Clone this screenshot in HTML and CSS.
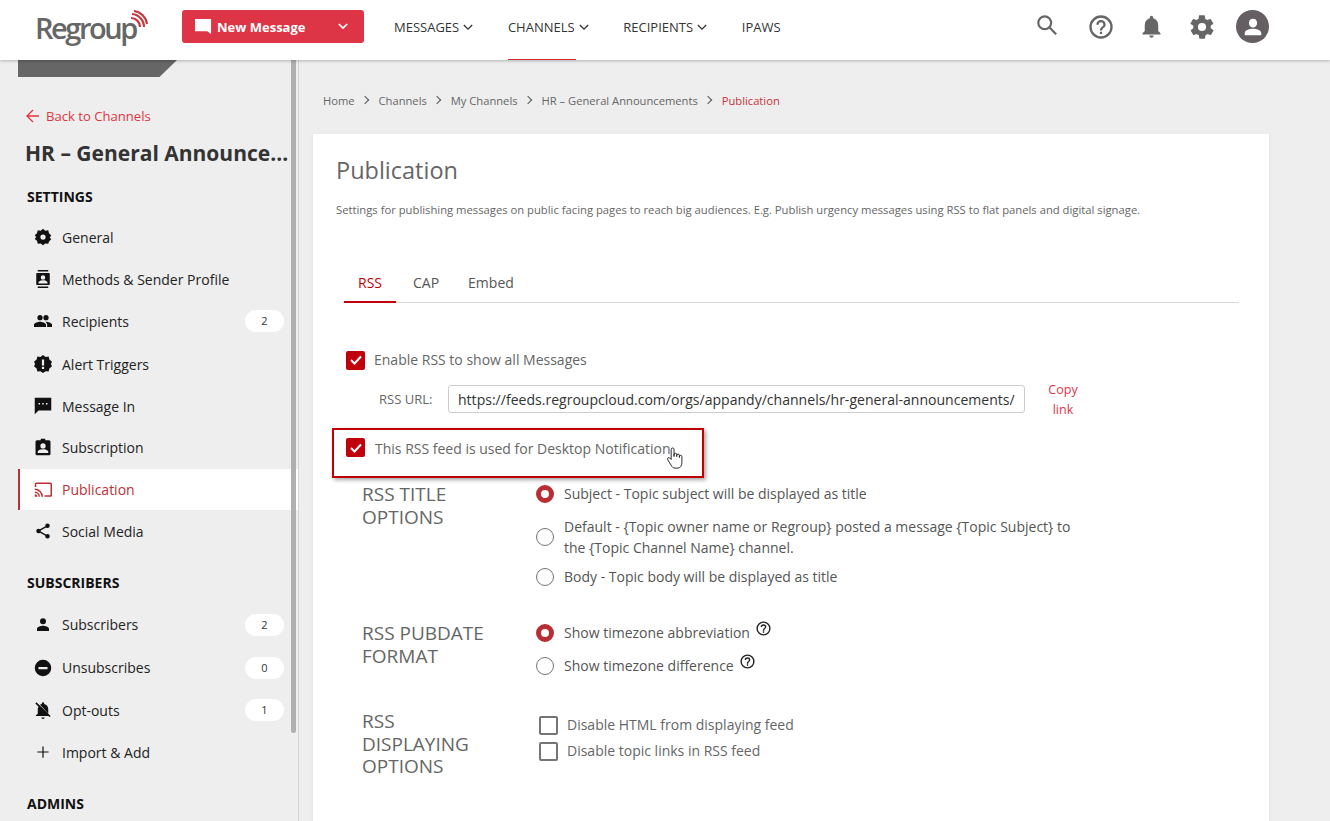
FILE: index.html
```html
<!DOCTYPE html>
<html lang="en">
<head>
    <meta charset="UTF-8">
    <title>Publication - Regroup</title>
    <link rel="stylesheet" href="styles.css">
</head>
<body>
    <header class="topbar">
        <div class="logo">
            <span class="logo-text">Regroup</span>
            <svg class="logo-waves" viewBox="0 0 18 18" width="18" height="18" fill="none" stroke="#c8373c" stroke-width="2.2">
                <path d="M1 8a9 9 0 0 1 9 9"/>
                <path d="M2 4a13 13 0 0 1 12 13" />
                <path d="M4 1a15 15 0 0 1 13 13"/>
            </svg>
        </div>
        <button class="new-message">
            <svg viewBox="0 0 18 18" width="17" height="17" fill="#fff"><path d="M0 1h17v16l-4-3H0z"/></svg>
            <span>New Message</span>
            <svg class="btn-caret" viewBox="0 0 12 8" width="10" height="7" fill="none" stroke="#fff" stroke-width="2"><path d="M1 1l5 5 5-5"/></svg>
        </button>
        <nav class="topnav">
            <a href="#">MESSAGES <svg viewBox="0 0 12 8" width="10" height="7" fill="none" stroke="#333" stroke-width="1.6"><path d="M1 1l5 5 5-5"/></svg></a>
            <a href="#" class="active">CHANNELS <svg viewBox="0 0 12 8" width="10" height="7" fill="none" stroke="#333" stroke-width="1.6"><path d="M1 1l5 5 5-5"/></svg></a>
            <a href="#">RECIPIENTS <svg viewBox="0 0 12 8" width="10" height="7" fill="none" stroke="#333" stroke-width="1.6"><path d="M1 1l5 5 5-5"/></svg></a>
            <a href="#">IPAWS</a>
        </nav>
        <div class="top-icons">
            <svg class="search-icon" viewBox="0 0 24 24" width="22" height="22" fill="none" stroke="#666" stroke-width="2.400"><circle cx="9.500" cy="9.500" r="7"/><path d="M14.500 14.500L22 22"/></svg>
            <svg viewBox="0 0 24 24" width="28" height="28" fill="#666"><path d="M11 18h2v-2h-2v2zm1-16a10 10 0 1 0 0 20 10 10 0 0 0 0-20zm0 18a8 8 0 1 1 0-16 8 8 0 0 1 0 16zm0-14a4 4 0 0 0-4 4h2a2 2 0 1 1 4 0c0 2-3 1.750-3 5h2c0-2.250 3-2.500 3-5a4 4 0 0 0-4-4z"/></svg>
            <svg viewBox="0 0 24 24" width="27" height="27" fill="#666"><path d="M12 22c1.100 0 2-.9 2-2h-4c0 1.100.9 2 2 2zm6-6v-5c0-3.100-1.600-5.600-4.500-6.300V4a1.500 1.500 0 0 0-3 0v.7C7.600 5.400 6 7.900 6 11v5l-2 2v1h16v-1l-2-2z"/></svg>
            <svg viewBox="0 0 24 24" width="28" height="28" fill="#666"><path d="M19.400 13c0-.3.100-.6.100-1s0-.7-.1-1l2.100-1.600c.2-.2.200-.4.100-.6l-2-3.500c-.1-.2-.4-.3-.6-.2l-2.500 1c-.5-.4-1.100-.7-1.700-1l-.4-2.600c0-.3-.2-.5-.5-.5h-4c-.3 0-.5.200-.5.400l-.4 2.700c-.6.300-1.200.6-1.700 1l-2.500-1c-.2-.1-.5 0-.6.200l-2 3.500c-.1.200-.1.400.1.600L4.600 11c0 .3-.1.600-.1 1s0 .7.100 1l-2.100 1.600c-.2.200-.2.400-.1.600l2 3.500c.1.200.4.300.6.200l2.500-1c.5.400 1.100.7 1.700 1l.4 2.600c0 .3.200.5.500.5h4c.3 0 .5-.2.500-.4l.4-2.700c.6-.3 1.200-.6 1.700-1l2.500 1c.2.100.5 0 .6-.2l2-3.500c.1-.2.100-.4-.1-.6L19.400 13zM12 15.500a3.500 3.500 0 1 1 0-7 3.500 3.500 0 0 1 0 7z"/></svg>
            <span class="avatar"><svg viewBox="0 0 24 24" width="22" height="22" fill="#fff"><path d="M12 12.500c2.500 0 4.500-2.200 4.500-5S14.500 3 12 3 7.500 4.700 7.500 7.500s2 5 4.500 5zm0 1.500c-3 0-9 1.500-9 4.500V21h18v-2.500c0-3-6-4.500-9-4.500z"/></svg></span>
        </div>
    </header>

    <div class="layout">
        <aside class="sidebar">
            <div class="side-tab"></div>
            <a href="#" class="back-link">
                <svg viewBox="0 0 14 14" width="14" height="14" fill="none" stroke="#e0353f" stroke-width="1.300"><path d="M13 7H1M7 1L1 7l6 6"/></svg>
                Back to Channels
            </a>
            <div class="channel-name">HR – General Announce...</div>

            <h4 class="side-title">SETTINGS</h4>
            <a href="#" class="side-item">
                <svg viewBox="0 0 24 24" fill="#111"><path fill-rule="evenodd" d="M12 1l3 2.500 4-.5 1 4 3 3-2 2.500 2 2.500-3 3-1 3-4-.5L12 23l-3-2.500-4 .5-1-4-3-2.500L3 12 1 9.500l3-2.500 1-4 4 .5L12 1zm0 7.500a3.500 3.500 0 1 0 0 7 3.500 3.500 0 0 0 0-7z"/></svg>
                <span>General</span>
            </a>
            <a href="#" class="side-item">
                <svg viewBox="0 0 24 24" fill="#111"><path fill-rule="evenodd" d="M5 0h14v2H5zM5 22h14v2H5zM4 4h16a1 1 0 0 1 1 1v14a1 1 0 0 1-1 1H4a1 1 0 0 1-1-1V5a1 1 0 0 1 1-1zm8 3a3 3 0 1 0 0 6 3 3 0 0 0 0-6zm-6 11h12v-1.500c0-2-4-3-6-3s-6 1-6 3z"/></svg>
                <span>Methods &amp; Sender Profile</span>
            </a>
            <a href="#" class="side-item">
                <svg viewBox="0 0 24 24" fill="#111"><path d="M16 11a3.500 3.500 0 1 0 0-7 3.500 3.500 0 0 0 0 7zm-8 0a3.500 3.500 0 1 0 0-7 3.500 3.500 0 0 0 0 7zm0 2c-2.500 0-8 1.300-8 4v3h16v-3c0-2.700-5.500-4-8-4zm8 0h-1c1.200.9 2.500 2.200 2.500 4v3H24v-3c0-2.700-5.500-4-8-4z"/></svg>
                <span>Recipients</span>
                <em class="count">2</em>
            </a>
            <a href="#" class="side-item alert">
                <svg viewBox="0 0 24 24" fill="#111"><path fill-rule="evenodd" d="M12 0l3.500 2.500 4-.5 1 4L24 9l-1.500 3L24 15l-3.500 3-1 4-4-.5L12 24l-3.500-2.500-4 .5-1-4L0 15l1.500-3L0 9l3.500-3 1-4 4 .5L12 0zm-1.500 6v8h3V6zm0 9.500v3h3v-3z"/></svg>
                <span>Alert Triggers</span>
            </a>
            <a href="#" class="side-item">
                <svg viewBox="0 0 24 24" fill="#111"><path fill-rule="evenodd" d="M1 1h22v17H6l-5 5zm5 7v2h2V8zm5 0v2h2V8zm5 0v2h2V8z"/></svg>
                <span>Message In</span>
            </a>
            <a href="#" class="side-item lift">
                <svg viewBox="0 0 24 24" fill="#111"><path fill-rule="evenodd" d="M4 3h5V1h6v2h5a2 2 0 0 1 2 2v16a2 2 0 0 1-2 2H4a2 2 0 0 1-2-2V5a2 2 0 0 1 2-2zm8 4a3.500 3.500 0 1 0 0 7 3.500 3.500 0 0 0 0-7zM5 20h14v-1.500c0-2.500-4.500-3.500-7-3.500s-7 1-7 3.500z"/></svg>
                <span>Subscription</span>
            </a>
            <a href="#" class="side-item active">
                <svg viewBox="0 0 24 24" fill="none" stroke="#bd2f36" stroke-width="2"><path d="M2 8V4a1 1 0 0 1 1-1h19a1 1 0 0 1 1 1v15a1 1 0 0 1-1 1h-8"/><path d="M1 11a10 10 0 0 1 10 10M1 15a6 6 0 0 1 6 6"/><path d="M1 19a2 2 0 0 1 2 2" stroke-width="3"/></svg>
                <span>Publication</span>
            </a>
            <a href="#" class="side-item">
                <svg viewBox="0 0 24 24" fill="#111"><path d="M18 16c-.8 0-1.500.3-2 .8L8.900 12.700c.1-.2.100-.5.100-.7s0-.5-.1-.7L16 7.200c.5.500 1.200.8 2 .8a3 3 0 1 0-3-3c0 .2 0 .5.100.7L8 9.800C7.500 9.300 6.800 9 6 9a3 3 0 1 0 0 6c.8 0 1.500-.3 2-.8l7.100 4.100c-.1.200-.1.500-.1.700a3 3 0 1 0 3-3z"/></svg>
                <span>Social Media</span>
            </a>

            <h4 class="side-title second">SUBSCRIBERS</h4>
            <a href="#" class="side-item tall">
                <svg viewBox="0 0 24 24" fill="#111"><path d="M12 11a4 4 0 1 0 0-8 4 4 0 0 0 0 8zm0 2c-2.700 0-8 1.300-8 4v3h16v-3c0-2.700-5.300-4-8-4z"/></svg>
                <span>Subscribers</span>
                <em class="count">2</em>
            </a>
            <a href="#" class="side-item tall">
                <svg viewBox="0 0 24 24" fill="#111"><path fill-rule="evenodd" d="M12 1a11 11 0 1 0 0 22 11 11 0 0 0 0-22zM6 10.500h12v3H6z"/></svg>
                <span>Unsubscribes</span>
                <em class="count">0</em>
            </a>
            <a href="#" class="side-item">
                <svg viewBox="0 0 24 24" fill="#111"><path d="M12 24c1.300 0 2.200-1 2.200-2H9.800c0 1 .9 2 2.200 2zM19 11c0-3.500-2-6.300-5.500-7V3a1.500 1.500 0 0 0-3 0v1c-1 .2-1.800.6-2.500 1.100L19 16.500zM3.300 1.800L1.800 3.300 6 7.500c-.6 1-1 2.200-1 3.500v6l-2.500 2v1h16.800l1.400 1.400 1.500-1.500z"/></svg>
                <span>Opt-outs</span>
                <em class="count">1</em>
            </a>
            <a href="#" class="side-item">
                <svg viewBox="0 0 24 24" fill="none" stroke="#111" stroke-width="1.600"><path d="M12 4.500v15M4.500 12h15"/></svg>
                <span>Import &amp; Add</span>
            </a>

            <h4 class="side-title second">ADMINS</h4>
            <div class="side-scroll"></div>
        </aside>

        <main class="main">
            <div class="crumbs">
                <a href="#">Home</a><i></i>
                <a href="#">Channels</a><i></i>
                <a href="#">My Channels</a><i></i>
                <a href="#">HR – General Announcements</a><i></i>
                <a href="#" class="current">Publication</a>
            </div>

            <section class="card">
                <h2>Publication</h2>
                <p class="desc">Settings for publishing messages on public facing pages to reach big audiences. E.g. Publish urgency messages using RSS to flat panels and digital signage.</p>

                <div class="tabs">
                    <a href="#" class="active">RSS</a>
                    <a href="#">CAP</a>
                    <a href="#">Embed</a>
                </div>

                <div class="check-row first">
                    <span class="box checked"><svg viewBox="0 0 14 14" width="14" height="14" fill="none" stroke="#fff" stroke-width="2"><path d="M2 7l3.500 3.500L12 3.500"/></svg></span>
                    <label>Enable RSS to show all Messages</label>
                </div>
                <div class="url-row">
                    <label>RSS URL:</label>
                    <input type="text" value="https://feeds.regroupcloud.com/orgs/appandy/channels/hr-general-announcements/">
                    <a href="#" class="copy">Copy<br>link</a>
                </div>
                <div class="callout">
                    <span class="box checked"><svg viewBox="0 0 14 14" width="14" height="14" fill="none" stroke="#fff" stroke-width="2"><path d="M2 7l3.500 3.500L12 3.500"/></svg></span>
                    <label>This RSS feed is used for Desktop Notification</label>
                    <svg class="cursor" viewBox="0 0 18 24" width="18" height="23" fill="#fff" stroke="#222" stroke-width="1"><path d="M5 2.500a1.500 1.500 0 0 1 3 0V10V8a1.400 1.400 0 0 1 2.800 0v2-1.200a1.400 1.400 0 0 1 2.800 0V11 10a1.300 1.300 0 0 1 2.600 0v6c0 3-1.500 6-4 6H9c-2 0-3-1-4-3l-3.500-5.500c-1-2 1-3 2-2L5 13z"/></svg>
                </div>

                <div class="option-group title-opts">
                    <h3>RSS TITLE OPTIONS</h3>
                    <div class="options">
                        <div class="radio-row"><span class="radio on"></span><label>Subject - Topic subject will be displayed as title</label></div>
                        <div class="radio-row"><span class="radio"></span><label>Default - {Topic owner name or Regroup} posted a message {Topic Subject} to the {Topic Channel Name} channel.</label></div>
                        <div class="radio-row"><span class="radio"></span><label>Body - Topic body will be displayed as title</label></div>
                    </div>
                </div>

                <div class="option-group date-opts">
                    <h3>RSS PUBDATE FORMAT</h3>
                    <div class="options">
                        <div class="radio-row"><span class="radio on"></span><label>Show timezone abbreviation</label><svg class="hint" viewBox="0 0 24 24" width="17" height="17" fill="#222"><path d="M11 18h2v-2h-2v2zm1-16a10 10 0 1 0 0 20 10 10 0 0 0 0-20zm0 18a8 8 0 1 1 0-16 8 8 0 0 1 0 16zm0-14a4 4 0 0 0-4 4h2a2 2 0 1 1 4 0c0 2-3 1.750-3 5h2c0-2.250 3-2.500 3-5a4 4 0 0 0-4-4z"/></svg></div>
                        <div class="radio-row"><span class="radio"></span><label>Show timezone difference</label><svg class="hint" viewBox="0 0 24 24" width="17" height="17" fill="#222"><path d="M11 18h2v-2h-2v2zm1-16a10 10 0 1 0 0 20 10 10 0 0 0 0-20zm0 18a8 8 0 1 1 0-16 8 8 0 0 1 0 16zm0-14a4 4 0 0 0-4 4h2a2 2 0 1 1 4 0c0 2-3 1.750-3 5h2c0-2.250 3-2.500 3-5a4 4 0 0 0-4-4z"/></svg></div>
                    </div>
                </div>

                <div class="option-group display-opts">
                    <h3>RSS DISPLAYING OPTIONS</h3>
                    <div class="options checks">
                        <div class="check-row"><span class="box"></span><label>Disable HTML from displaying feed</label></div>
                        <div class="check-row"><span class="box"></span><label>Disable topic links in RSS feed</label></div>
                    </div>
                </div>
            </section>
        </main>
    </div>
</body>
</html>
```

FILE: styles.css
```css
* {
    box-sizing: border-box;
}

html, body {
    height: 100%;
}

body {
    margin: 0;
    overflow: hidden;
    background: #eeeeee;
    color: #333;
    font-family: 'Open Sans', sans-serif;
    font-size: 14px;
}

a {
    color: inherit;
    text-decoration: none;
}

/* top bar */
.topbar {
    position: relative;
    z-index: 2;
    display: flex;
    align-items: center;
    height: 60px;
    padding-bottom: 7px;
    background: #fff;
    box-shadow: 0 1px 3px rgba(0,0,0,0.25);
}

.logo {
    position: relative;
    width: 182px;
    padding: 2px 0 0 35px;
}

.logo-text {
    color: #666;
    font-size: 29px;
    font-weight: 600;
    letter-spacing: -2.450px;
}

.logo-waves {
    position: absolute;
    left: 130px;
    top: 4px;
}

.new-message {
    display: flex;
    align-items: center;
    gap: 5px;
    width: 182px;
    height: 33px;
    padding: 0 16px 0 13px;
    background: #de3546;
    border: none;
    border-radius: 3px;
    color: #fff;
    font-family: inherit;
    font-size: 13px;
    font-weight: 700;
}

.btn-caret {
    margin-left: auto;
}

.topnav {
    display: flex;
    align-self: stretch;
    margin: 0 0 -7px 30px;
}

.topnav a {
    position: relative;
    display: flex;
    align-items: center;
    gap: 4px;
    height: 60px;
    margin-right: 34.700px;
    padding-bottom: 7px;
    color: #333;
    font-size: 13px;
}

.topnav a svg {
    margin-top: 2px;
}

.topnav a.active::after {
    content: "";
    position: absolute;
    left: 0;
    bottom: 0;
    width: 68px;
    height: 1px;
    background: #cf2b35;
}

.top-icons {
    display: flex;
    align-items: center;
    gap: 23px;
    margin-left: auto;
    padding-right: 61px;
}

.search-icon {
    margin: -3px 6px 0 0;
}

.avatar {
    display: flex;
    align-items: center;
    justify-content: center;
    width: 33px;
    height: 33px;
    margin-left: -3px;
    background: #655e63;
    border-radius: 50%;
}

/* sidebar */
.layout {
    display: flex;
    height: 761px;
}

.sidebar {
    position: relative;
    width: 299px;
    padding-left: 18px;
    overflow: hidden;
    border-right: 1px solid #d4d4d4;
}

.side-tab {
    width: 159px;
    height: 17px;
    background: #666;
    clip-path: polygon(0 0, 100% 0, 89% 100%, 0 100%);
}

.back-link {
    display: flex;
    align-items: center;
    gap: 6px;
    margin: 30px 0 0 8px;
    color: #e0353f;
    font-size: 13.100px;
    line-height: 18px;
}

.channel-name {
    margin: 13px 0 0 7px;
    color: #333;
    font-size: 21px;
    font-weight: 700;
    line-height: 30px;
    white-space: nowrap;
}

.side-title {
    margin: 19px 0 0 9px;
    color: #111;
    font-size: 14px;
    font-weight: 700;
    line-height: 20px;
}

.side-title.second {
    margin-top: 21px;
}

.side-item {
    display: flex;
    align-items: center;
    height: 42px;
    padding-left: 16px;
    color: #222;
    font-size: 14px;
}

.side-title + .side-item {
    margin-top: 9px;
}

.side-title.second + .side-item {
    margin-top: 10px;
}

.side-item.alert {
    margin-top: 1px;
}

.side-item.lift {
    padding-bottom: 2px;
}

.side-item.tall {
    height: 43px;
}

.side-item svg {
    flex: none;
    width: 18px;
    height: 18px;
    margin-right: 10px;
}

.side-item.active {
    height: 41px;
    background: #fff;
    border-left: 2px solid #bd2f36;
    padding-left: 14px;
    color: #bd2f36;
}

.count {
    width: 39px;
    height: 22px;
    margin-left: auto;
    margin-right: 14px;
    background: #fff;
    border-radius: 11px;
    color: #333;
    font-size: 11px;
    font-style: normal;
    line-height: 22px;
    text-align: center;
}

.side-scroll {
    position: absolute;
    left: 291px;
    top: 0;
    width: 5px;
    height: 673px;
    background: #b0b0b0;
    border-radius: 0 0 3px 3px;
}

/* main column */
.main {
    flex: 1;
    padding: 32px 61px 0 14px;
}

.crumbs {
    display: flex;
    align-items: center;
    height: 16px;
    margin-left: 10px;
    color: #666;
    font-size: 11.200px;
}

.crumbs i {
    width: 6px;
    height: 6px;
    margin: 0 10.900px 1px 7px;
    border-top: 1px solid #555;
    border-right: 1px solid #555;
    transform: rotate(45deg);
}

.crumbs .current {
    color: #c4343a;
}

.card {
    height: 700px;
    margin-top: 26px;
    padding: 20px 30px 0 23px;
    background: #fff;
    box-shadow: 0 1px 3px rgba(0,0,0,0.08);
}

.card h2 {
    margin: 0;
    color: #666;
    font-size: 23.500px;
    font-weight: 400;
    line-height: 33px;
}

.desc {
    margin: 15px 0 0;
    color: #666;
    font-size: 11.250px;
    line-height: 16px;
}

.tabs {
    display: flex;
    height: 39px;
    margin: 46px 0 0 7px;
    border-bottom: 1px solid #d8d8d8;
}

.tabs a {
    padding: 9px 15px 0;
    color: #555;
    font-size: 14px;
    line-height: 20px;
}

.tabs a:nth-child(2) {
    margin-left: 2px;
    padding-right: 14px;
}

.tabs a.active {
    height: 39px;
    margin-left: 1px;
    padding: 9px 14px 0;
    border-bottom: 2px solid #c0000c;
    color: #c0000c;
}

/* form bits */
.box {
    display: flex;
    flex: none;
    align-items: center;
    justify-content: center;
    width: 19px;
    height: 19px;
    background: #fff;
    border: 2px solid #757575;
    border-radius: 2px;
}

.box.checked {
    background: #c0000c;
    border: none;
}

.check-row {
    display: flex;
    align-items: center;
    gap: 9px;
    color: #666;
    font-size: 14px;
    line-height: 20px;
}

.check-row.first {
    margin: 47px 0 0 10px;
}

.url-row {
    display: flex;
    align-items: center;
    margin: 8px 0 0 43px;
}

.url-row label {
    width: 69px;
    color: #666;
    font-size: 13px;
}

.url-row input {
    width: 577px;
    height: 28px;
    padding: 0 9px;
    background: #fff;
    border: 1px solid #ccc;
    border-radius: 3px;
    color: #333;
    font-family: inherit;
    font-size: 14.050px;
}

.copy {
    width: 76px;
    padding-top: 2px;
    color: #e0354a;
    font-size: 12.500px;
    line-height: 20px;
    text-align: center;
}

.callout {
    position: relative;
    display: flex;
    align-items: center;
    gap: 10px;
    width: 372px;
    height: 50px;
    margin: 8px 0 0 -4px;
    padding: 0 0 11px 12px;
    border: 2px solid #c00000;
    box-shadow: 2px 2px 4px rgba(0,0,0,0.35);
    color: #666;
    line-height: 20px;
}

.callout label {
    margin-top: 3px;
}

.cursor {
    position: absolute;
    left: 332px;
    top: 17px;
}

.option-group {
    display: flex;
    margin-left: 26px;
}

.option-group h3 {
    flex: none;
    width: 174px;
    margin: 0;
    padding-right: 50px;
    color: #666;
    font-size: 19px;
    font-weight: 400;
    line-height: 22.500px;
}

.options {
    width: 545px;
    margin-top: -6px;
}

.title-opts {
    margin-top: 5px;
}

.date-opts {
    margin-top: 32px;
}

.display-opts {
    margin-top: 28px;
}

.radio-row {
    display: flex;
    align-items: center;
    gap: 10px;
    height: 33px;
    color: #555;
    font-size: 14px;
    line-height: 21px;
}

.title-opts .radio-row:nth-child(2) {
    height: 53px;
}

.title-opts .radio-row:nth-child(3) {
    height: 27px;
}

.radio {
    flex: none;
    width: 18px;
    height: 18px;
    background: #fff;
    border: 1px solid #757575;
    border-radius: 50%;
}

.radio.on {
    border: 5px solid #b82e34;
}

.hint {
    margin: -8px 0 0 -5px;
}

.checks {
    margin-top: 5px;
    padding-left: 3px;
}

.checks .check-row {
    margin-bottom: 6px;
}
```
